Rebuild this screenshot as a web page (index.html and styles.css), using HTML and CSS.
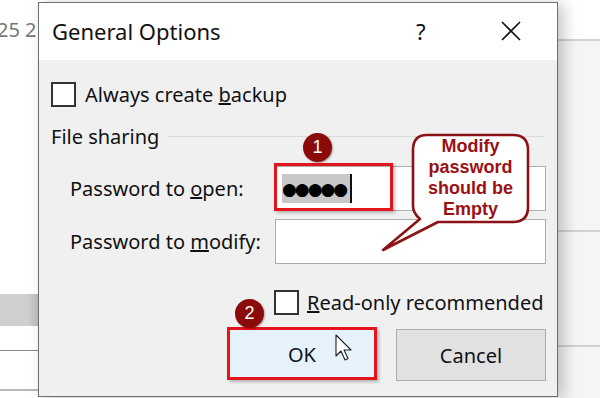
FILE: index.html
```html
<!DOCTYPE html>
<html lang="en">
<head>
    <meta charset="UTF-8">
    <title>General Options</title>
    <link rel="stylesheet" href="styles.css">
</head>
<body>
    <div class="desk">
        <div class="back-left">
            <span class="back-date">25 2</span>
            <div class="back-band"></div>
            <div class="back-rule rule-a"></div>
            <div class="back-rule rule-b"></div>
        </div>
        <div class="back-right">
            <div class="back-line line-a"></div>
            <div class="back-line line-b"></div>
            <div class="back-line line-c"></div>
        </div>

        <div class="dialog">
            <div class="titlebar">
                <span class="title">General Options</span>
                <span class="help">?</span>
                <svg class="close" width="20" height="20" viewBox="0 0 20 20">
                    <path d="M1 1 L19 19 M19 1 L1 19" stroke="#111" stroke-width="1.6" fill="none"/>
                </svg>
            </div>

            <div class="content">
                <label class="check-row">
                    <span class="box"></span>
                    <span>Always create <u>b</u>ackup</span>
                </label>

                <div class="group-head">
                    <span>File sharing</span>
                    <span class="group-line"></span>
                </div>

                <div class="form-grid">
                    <span class="field-label">Password to <u>o</u>pen:</span>
                    <div class="field">
                        <span class="selected">&#9679;&#9679;&#9679;&#9679;&#9679;</span><span class="caret"></span>
                    </div>
                    <span class="field-label">Password to <u>m</u>odify:</span>
                    <div class="field"></div>
                </div>

                <label class="check-row readonly">
                    <span class="box"></span>
                    <span><u>R</u>ead-only recommended</span>
                </label>

                <div class="buttons">
                    <button class="btn btn-ok">OK</button>
                    <button class="btn">Cancel</button>
                </div>
            </div>
        </div>

        <!-- annotations -->
        <div class="mark mark-open"></div>
        <div class="mark mark-ok"></div>
        <span class="badge badge-1">1</span>
        <span class="badge badge-2">2</span>

        <svg class="callout-shape" width="160" height="125" viewBox="0 0 160 125">
            <path d="M47 3 H133 Q148 3 148 18 V75 Q148 90 133 90 H58 L3 118 L40 87 Q33 81 33 74 V18 Q33 3 47 3 Z"
                  fill="#fff" stroke="#8b1216" stroke-width="2.6" stroke-linejoin="round"/>
        </svg>
        <div class="callout-text">Modify<br>password<br>should be<br>Empty</div>

        <svg class="pointer" width="22" height="30" viewBox="0 0 22 30">
            <path d="M1 1 L1 22 L6 17 L10 26 L13 24.5 L9 16 L16 16 Z" fill="#fff" stroke="#222" stroke-width="1.1" stroke-linejoin="round"/>
        </svg>
    </div>
</body>
</html>
```

FILE: styles.css
```css
body {
    margin: 0;
    font-family: "Noto Sans", "Open Sans", sans-serif;
    background: #fff;
}
.desk {
    position: relative;
    width: 600px;
    height: 398px;
    overflow: hidden;
    background: #fff;
}

/* page behind the dialog */
.back-left {
    position: absolute;
    left: 0;
    top: 0;
    width: 40px;
    height: 398px;
}
.back-date {
    position: absolute;
    left: -3px;
    top: 16px;
    font-size: 20px;
    color: #777;
}
.back-band {
    position: absolute;
    left: 0;
    top: 294px;
    width: 40px;
    height: 32px;
    background: linear-gradient(to right, #cfcfcf 70%, #b9b9b9);
}
.back-rule {
    position: absolute;
    left: 0;
    width: 40px;
    height: 1px;
    background: #8a8a8a;
}
.rule-a { top: 350px; }
.rule-b { top: 389px; background: #b8b8b8; height: 2px; }

.back-right {
    position: absolute;
    left: 558px;
    top: 0;
    width: 42px;
    height: 398px;
    background: linear-gradient(to bottom, #fff 40px, #f5f5f5 40px);
}
.back-line {
    position: absolute;
    left: 0;
    width: 42px;
    height: 2px;
    background: #d2d2d2;
}
.line-a { top: 39px; }
.line-b { top: 230px; }
.line-c { top: 345px; }

/* dialog window */
.dialog {
    position: absolute;
    left: 38px;
    top: 2px;
    width: 518px;
    height: 393px;
    border: 1px solid #6e6e6e;
    background: #f0f0f0;
    box-shadow: 6px 2px 14px rgba(0, 0, 0, 0.22);
    display: flex;
    flex-direction: column;
}
.titlebar {
    height: 57px;
    background: #fff;
    display: flex;
    align-items: center;
    padding-left: 13px;
}
.title {
    font-size: 22px;
    color: #111;
    flex: 1;
    margin-top: -2px;
}
.help {
    font-size: 22px;
    color: #111;
    width: 20px;
    margin-right: 65px;
    margin-top: -2px;
}
.close {
    margin-right: 36px;
    margin-top: -2px;
}

.content {
    flex: 1;
    padding: 21px 0 0 0;
    font-size: 20px;
    color: #111;
}
.check-row {
    display: flex;
    align-items: center;
    gap: 9px;
    padding-left: 12px;
    height: 26px;
}
.box {
    width: 21px;
    height: 21px;
    border: 2px solid #333;
    background: #fff;
}
.group-head {
    display: flex;
    align-items: center;
    gap: 8px;
    padding: 0 12px;
    margin-top: 16px;
    height: 26px;
}
.group-line {
    flex: 1;
    height: 1px;
    background: #d9d9d9;
}
.form-grid {
    display: grid;
    grid-template-columns: 205px 271px;
    row-gap: 8px;
    padding-left: 31px;
    margin-top: 17px;
    align-items: center;
}
.field {
    height: 43px;
    border: 1px solid #adadad;
    background: #fff;
    display: flex;
    align-items: center;
    padding-left: 6px;
}
.selected {
    background: #c8c8c8;
    height: 29px;
    line-height: 30px;
    font-size: 17px;
    letter-spacing: -2px;
    padding-right: 4px;
    font-family: "DejaVu Sans", sans-serif;
    color: #000;
}
.caret {
    width: 2px;
    height: 29px;
    background: #111;
}
.readonly {
    padding-left: 235px;
    margin-top: 25px;
    gap: 8px;
}
.buttons {
    display: flex;
    gap: 19px;
    padding-left: 188px;
    margin-top: 13px;
    align-items: flex-start;
}
.btn {
    width: 150px;
    height: 52px;
    border: 1px solid #adadad;
    background: #e1e1e1;
    font-family: inherit;
    font-size: 20px;
    color: #111;
    margin-top: 1px;
}
.btn-ok {
    background: #e5f1fb;
    border-color: #0078d7;
    margin-top: 0;
}

/* red annotations */
.mark {
    position: absolute;
    border: 3px solid #e3141b;
    box-shadow: 2px 2px 3px rgba(0, 0, 0, 0.25);
}
.mark-open {
    left: 274px;
    top: 163px;
    width: 113px;
    height: 42px;
}
.mark-ok {
    left: 227px;
    top: 327px;
    width: 144px;
    height: 47px;
}
.badge {
    position: absolute;
    width: 29px;
    height: 29px;
    border-radius: 50%;
    background: #8b0a0a;
    color: #fff;
    font-family: "Liberation Sans", Arial, sans-serif;
    font-size: 18px;
    line-height: 29px;
    text-align: center;
    box-shadow: 1px 1px 2px rgba(0, 0, 0, 0.3);
}
.badge-1 { left: 303px; top: 133px; }
.badge-2 { left: 235px; top: 299px; }

.callout-shape {
    position: absolute;
    left: 380px;
    top: 132px;
}
.callout-text {
    position: absolute;
    left: 413px;
    top: 136px;
    width: 115px;
    text-align: center;
    font-family: "Liberation Sans", Arial, sans-serif;
    font-weight: bold;
    font-size: 18px;
    line-height: 21px;
    color: #9b1014;
}
.pointer {
    position: absolute;
    left: 335px;
    top: 334px;
}
```
